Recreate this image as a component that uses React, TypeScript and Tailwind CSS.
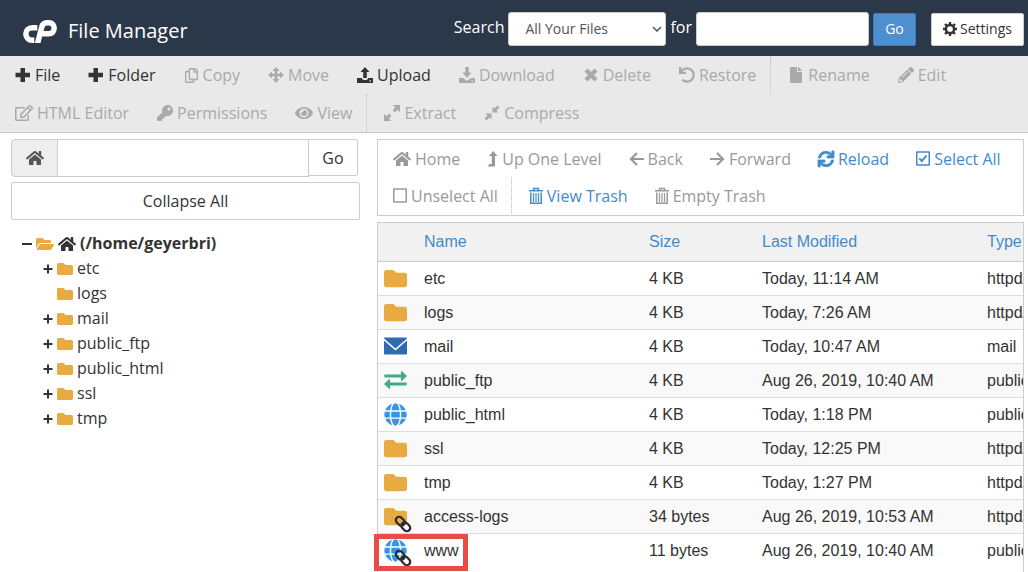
import type { ReactNode } from "react";
import {
  FaEye,
  FaFile,
  FaFolder,
  FaFolderOpen,
  FaGlobe,
  FaHome,
  FaKey,
  FaPencilAlt,
  FaRegCopy,
  FaRegEdit,
  FaSync,
  FaUndo,
} from "react-icons/fa";

function Logo() {
  return (
    <svg width="34" height="23" viewBox="0 0 102 69" fill="none" stroke="currentColor" strokeWidth="16.500" role="img" aria-label="cPanel">
      <path d="M43 23.500H27.500C17 23.500 8.500 31.500 8.500 42S17 60.500 27.500 60.500H34" />
      <path d="M43.500 71L56 22Q59.500 8.500 71 8.500H77.500C88 8.500 93.500 15.500 93.500 25S87 41.500 77.500 41.500H58" />
    </svg>
  );
}

function Glyph({ d, width = 16 }: { d: string; width?: number }) {
  return (
    <svg width={width} height="16" viewBox={`0 0 ${width} 16`} fill="currentColor" fillRule="evenodd" aria-hidden="true">
      <path d={d} />
    </svg>
  );
}

const plus = "M5.500 1h4.500v4.800h5v4.400h-5V15H5.500v-4.800h-5V5.800h5z";
const cross = "M4.500 1.500L8 5l3.500-3.500 3 3L11 8l3.500 3.500-3 3L8 11l-3.500 3.500-3-3L5 8 1.500 4.500z";
const move = "M8 0l3.500 4H9.300v2.700H12V4.500L16 8l-4 3.500V9.300H9.300V12h2.200L8 16l-3.500-4h2.200V9.300H4v2.200L0 8l4-3.500v2.200h2.700V4H4.500z";
const upload = "M8 0l4.500 5H9.800v6H6.200V5H3.500zM0 11h4.800c.3 1.500 1.400 2 3.200 2s2.900-.5 3.200-2H16v5H0zM12.500 13.300v1.200h1.500v-1.200z";
const download = "M6.200 0h3.600v5.500h2.700L8 11 3.500 5.500h2.700zM0 11h4.200L8 14l3.800-3H16v5H0zM12.500 13.300v1.200h1.500v-1.200z";
const extract = "M8.800 0h7.200v7.200l-2.400-2.400-2.600 2.600L8.600 5l2.600-2.600zM7.200 16H0V8.800l2.400 2.400L5 8.600 7.400 11l-2.600 2.600z";
const compress = "M8.500 7.500V1.500l2 2L13.500 .5l2 2L12.500 5.500l2 2zM7.500 8.500v6l-2-2L2.500 15.500l-2-2L3.500 10.500l-2-2z";
const levelUp = "M6.200 0l4.300 5H8v10.500H.5L2.500 13H4.800V5H2z";

function StrokeGlyph({ d }: { d: string }) {
  return (
    <svg width="15" height="16" viewBox="0 0 15 16" fill="none" stroke="currentColor" strokeWidth="2.200" aria-hidden="true">
      <path d={d} />
    </svg>
  );
}

function TrashIcon() {
  return (
    <svg width="14" height="18" viewBox="0 0 14 18" fill="none" stroke="currentColor" aria-hidden="true">
      <path d="M4.500 3V1.500h5V3" strokeWidth="1.300" />
      <path d="M0 3.750h14" strokeWidth="1.500" />
      <path d="M1.800 5.500v10.700h10.400V5.500" strokeWidth="1.500" />
      <path d="M4.500 6v9M7 6v9M9.500 6v9" strokeWidth="1.200" />
    </svg>
  );
}

function BoxIcon({ checked }: { checked?: boolean }) {
  return (
    <svg width="14" height="15" viewBox="0 0 14 15" fill="none" stroke="currentColor" aria-hidden="true">
      <rect x="0.750" y="1" width="12.500" height="13" rx="0.500" strokeWidth="1.500" />
      {checked && <path d="M3.300 7.300l2.500 2.700 4.800-5.300" strokeWidth="1.900" />}
    </svg>
  );
}

function GearIcon() {
  return (
    <svg width="14" height="14" viewBox="0 0 14 14" fill="none" stroke="currentColor" aria-hidden="true">
      <circle cx="7" cy="7" r="4.100" strokeWidth="2.500" />
      <path
        d="M7 0v2.500M7 11.500V14M0 7h2.500M11.500 7H14M2 2l1.900 1.900M10.100 10.100L12 12M12 2l-1.900 1.900M3.900 10.100L2 12"
        strokeWidth="2.400"
      />
    </svg>
  );
}

function ChevronIcon() {
  return (
    <svg width="10" height="6" viewBox="0 0 10 6" fill="none" stroke="currentColor" strokeWidth="1.500" aria-hidden="true">
      <path d="M1 1l4 4 4-4" />
    </svg>
  );
}

function MailIcon() {
  return (
    <svg width="23" height="18" viewBox="0 0 23 18" fill="#2f6bb0" aria-hidden="true">
      <path d="M1 0.500h21q1 0 1 1L11.500 11.500 0 1.500q0-1 1-1z" />
      <path d="M0 3.500l11.500 10L23 3.500V16.500q0 1-1 1H1q-1 0-1-1z" />
    </svg>
  );
}

function TransferIcon() {
  return (
    <svg width="23" height="18" viewBox="0 0 23 18" fill="#40ae85" aria-hidden="true">
      <path d="M0.500 3.500H17V0.300q0.500-.6 1 0L23 5l-5 4.700q-.5.600-1 0V6.500H0.500q-.5-1.500 0-3z" />
      <path d="M22.500 11.500H6V8.300q-.5-.6-1 0L0 13l5 4.700q.5.600 1 0V14.500h16.500q.5-1.500 0-3z" />
    </svg>
  );
}

function LinkBadge() {
  return (
    <svg
      className="absolute top-2.5 left-2.5 overflow-visible"
      width="18"
      height="18"
      viewBox="0 0 18 18"
      fill="none"
      stroke="#2c2c2c"
      strokeWidth="2.300"
      aria-hidden="true"
    >
      <g transform="rotate(45 9 9)">
        <rect x="0.200" y="5.700" width="9.800" height="6.600" rx="3.300" />
        <rect x="8" y="5.700" width="9.800" height="6.600" rx="3.300" />
      </g>
    </svg>
  );
}

type Tone = "dark" | "muted" | "gray" | "blue";

const tones: Record<Tone, string> = {
  dark: "text-[#333333]",
  muted: "text-[#aaaaaa]",
  gray: "text-[#999999]",
  blue: "text-[#428bca]",
};

type Action = { label: string; icon: ReactNode; tone: Tone; divided?: boolean };

function ActionButton({ label, icon, tone, divided }: Action) {
  return (
    <li className={divided ? "border-l border-dotted border-[#bbbbbb] pl-[3px]" : ""}>
      <button
        type="button"
        className={`flex h-full items-center gap-1 pr-[13px] pl-[14px] whitespace-nowrap ${tones[tone]}`}
      >
        {icon}
        {label}
      </button>
    </li>
  );
}

const fileActions: Action[] = [
  { label: "File", icon: <Glyph d={plus} />, tone: "dark" },
  { label: "Folder", icon: <Glyph d={plus} />, tone: "dark" },
  { label: "Copy", icon: <FaRegCopy size={15} />, tone: "muted" },
  { label: "Move", icon: <Glyph d={move} />, tone: "muted" },
  { label: "Upload", icon: <Glyph d={upload} />, tone: "dark" },
  { label: "Download", icon: <Glyph d={download} />, tone: "muted" },
  { label: "Delete", icon: <Glyph d={cross} />, tone: "muted" },
  { label: "Restore", icon: <FaUndo size={16} />, tone: "muted" },
  { label: "Rename", icon: <FaFile className="h-4 w-4" />, tone: "muted", divided: true },
  { label: "Edit", icon: <FaPencilAlt size={16} />, tone: "muted" },
  { label: "HTML Editor", icon: <FaRegEdit size={18} />, tone: "muted" },
  { label: "Permissions", icon: <FaKey size={16} />, tone: "muted" },
  { label: "View", icon: <FaEye size={18} />, tone: "muted" },
  { label: "Extract", icon: <Glyph d={extract} />, tone: "muted", divided: true },
  { label: "Compress", icon: <Glyph d={compress} />, tone: "muted" },
];

const navActions: Action[] = [
  { label: "Home", icon: <FaHome size={18} />, tone: "gray" },
  { label: "Up One Level", icon: <Glyph d={levelUp} width={11} />, tone: "gray" },
  { label: "Back", icon: <StrokeGlyph d="M8 2L2 8l6 6M2 8h13" />, tone: "gray" },
  { label: "Forward", icon: <StrokeGlyph d="M7 2l6 6-6 6M13 8H0" />, tone: "gray" },
  { label: "Reload", icon: <FaSync size={16} strokeWidth={24} className="overflow-visible" />, tone: "blue" },
  { label: "Select All", icon: <BoxIcon checked />, tone: "blue" },
  { label: "Unselect All", icon: <BoxIcon />, tone: "gray" },
  { label: "View Trash", icon: <TrashIcon />, tone: "blue", divided: true },
  { label: "Empty Trash", icon: <TrashIcon />, tone: "gray" },
];

const folders = [
  { name: "etc", open: true },
  { name: "logs", open: false },
  { name: "mail", open: true },
  { name: "public_ftp", open: true },
  { name: "public_html", open: true },
  { name: "ssl", open: true },
  { name: "tmp", open: true },
];

type Kind = "folder" | "mail" | "ftp" | "web";

type Row = { name: string; kind: Kind; linked?: boolean; size: string; modified: string; type: string };

const rows: Row[] = [
  { name: "etc", kind: "folder", size: "4 KB", modified: "Today, 11:14 AM", type: "httpd/unix-directory" },
  { name: "logs", kind: "folder", size: "4 KB", modified: "Today, 7:26 AM", type: "httpd/unix-directory" },
  { name: "mail", kind: "mail", size: "4 KB", modified: "Today, 10:47 AM", type: "mail" },
  { name: "public_ftp", kind: "ftp", size: "4 KB", modified: "Aug 26, 2019, 10:40 AM", type: "publicftp" },
  { name: "public_html", kind: "web", size: "4 KB", modified: "Today, 1:18 PM", type: "publichtml" },
  { name: "ssl", kind: "folder", size: "4 KB", modified: "Today, 12:25 PM", type: "httpd/unix-directory" },
  { name: "tmp", kind: "folder", size: "4 KB", modified: "Today, 1:27 PM", type: "httpd/unix-directory" },
  { name: "access-logs", kind: "folder", linked: true, size: "34 bytes", modified: "Aug 26, 2019, 10:53 AM", type: "httpd/unix-directory" },
  { name: "www", kind: "web", linked: true, size: "11 bytes", modified: "Aug 26, 2019, 10:40 AM", type: "publichtml" },
];

const kindIcons: Record<Kind, ReactNode> = {
  folder: <FaFolder size={23} color="#e8ab41" />,
  mail: <MailIcon />,
  ftp: <TransferIcon />,
  web: <FaGlobe size={23} color="#3595ea" />,
};

function Header() {
  return (
    <header className="flex h-14 items-center justify-between bg-[#2a3849] pr-1 pl-[23px] text-white">
      <div className="flex items-center gap-[11px] pt-1.5">
        <Logo />
        <h1 className="text-xl">File Manager</h1>
      </div>
      <form className="flex items-center pt-0.5" onSubmit={(e) => e.preventDefault()}>
        <label htmlFor="scope" className="mr-1 pb-1">
          Search
        </label>
        <div className="relative">
          <select
            id="scope"
            className="h-[34px] w-[158px] appearance-none rounded-[3px] border border-[#cccccc] bg-white pl-4 text-sm text-[#555555]"
          >
            <option>All Your Files</option>
          </select>
          <span className="pointer-events-none absolute top-3.5 right-1 text-[#555555]">
            <ChevronIcon />
          </span>
        </div>
        <label htmlFor="query" className="mx-1 pb-1">
          for
        </label>
        <input
          id="query"
          type="text"
          className="h-[34px] w-[173px] rounded-[3px] border border-[#cccccc] bg-white px-2 text-sm text-[#555555]"
        />
        <button type="submit" className="ml-1 h-[33px] w-[43px] rounded-xs border border-[#357ebd] bg-[#4f8fd0] text-sm">
          Go
        </button>
        <button
          type="button"
          className="ml-[15px] flex h-[33px] w-[93px] items-center justify-center gap-[3px] rounded-xs border border-[#cccccc] bg-white text-sm text-[#333333]"
        >
          <GearIcon />
          Settings
        </button>
      </form>
    </header>
  );
}

function Sidebar() {
  return (
    <aside className="w-[349px] shrink-0">
      <form className="flex items-start" onSubmit={(e) => e.preventDefault()}>
        <label
          htmlFor="path"
          aria-label="Home path"
          className="flex h-[38px] w-[47px] items-center justify-center rounded-l border border-[#cccccc] bg-[#eeeeee] text-[#555555]"
        >
          <FaHome size={18} />
        </label>
        <input
          id="path"
          type="text"
          className="-ml-px h-[38px] min-w-0 flex-1 border border-[#cccccc] px-3 text-[#555555]"
        />
        <button type="submit" className="mr-0.5 -ml-px h-[37px] w-[50px] rounded-r-xs border border-[#cccccc]">
          Go
        </button>
      </form>
      <button type="button" className="mt-[5px] h-[38px] w-full rounded-xs border border-[#cccccc]">
        Collapse All
      </button>
      <nav aria-label="Folders" className="mt-[11px] pl-[11px] leading-[25px]">
        <div className="flex h-[25px] items-center gap-1 font-bold">
          <button type="button" aria-label="Collapse" className="h-0.5 w-2.5 bg-[#333333]" />
          <FaFolderOpen size={18} color="#e8ab41" />
          <FaHome size={18} />
          <a href="#home">(/home/geyerbri)</a>
        </div>
        <ul>
          {folders.map((f) => (
            <li key={f.name} className="flex h-[25px] items-center gap-1 pl-[21px]">
              {f.open ? (
                <button type="button" aria-label={`Expand ${f.name}`} className="w-2.5">
                  <svg width="10" height="10" viewBox="0 0 10 10" fill="none" stroke="currentColor" strokeWidth="2" aria-hidden="true">
                    <path d="M0.500 5h9M5 0.500v9" />
                  </svg>
                </button>
              ) : (
                <span className="w-2.5" />
              )}
              <FaFolder size={16} color="#e8ab41" />
              <a href={`#${f.name}`}>{f.name}</a>
            </li>
          ))}
        </ul>
      </nav>
    </aside>
  );
}

function FileTable() {
  return (
    <div className="relative mt-1.5 flex grow flex-col">
      <div className="grow overflow-hidden border border-b-0 border-[#cccccc] font-['Liberation_Sans',Arial,sans-serif]">
        <table className="w-[860px] table-fixed border-collapse text-left">
          <colgroup>
            <col className="w-[42px]" />
            <col className="w-[225px]" />
            <col className="w-[113px]" />
            <col className="w-[225px]" />
            <col />
          </colgroup>
          <thead>
            <tr className="h-[38px] border-b border-[#cccccc] bg-[#f1f1f1] text-[#428bca]">
              <th aria-label="Icon" />
              <th className="pl-1 font-normal">Name</th>
              <th className="pl-1 font-normal">Size</th>
              <th className="pl-1 font-normal">Last Modified</th>
              <th className="pl-1 font-normal">Type</th>
            </tr>
          </thead>
          <tbody>
            {rows.map((r) => (
              <tr key={r.name} className="h-[34px] border-b border-[#dddddd] last:border-b-0 even:bg-[#f9f9f9]">
                <td className="pl-1.5">
                  <span className="relative flex w-[23px]">
                    {kindIcons[r.kind]}
                    {r.linked && <LinkBadge />}
                  </span>
                </td>
                <td className="pt-0.5 pl-1">{r.name}</td>
                <td className="pt-0.5 pl-1">{r.size}</td>
                <td className="pt-0.5 pl-1">{r.modified}</td>
                <td className="pt-0.5 pl-1">{r.type}</td>
              </tr>
            ))}
          </tbody>
        </table>
      </div>
      <div className="pointer-events-none absolute top-[312px] -left-[3px] h-[37px] w-[94px] border-5 border-[#ea4b45]" />
    </div>
  );
}

export default function App() {
  return (
    <div className="flex min-h-screen flex-col bg-white font-['Open_Sans',sans-serif] text-base text-[#333333]">
      <Header />
      <ul className="flex flex-wrap gap-x-px border-b border-[#c3c6ce] bg-[#e9e9e9] pl-px [&>li]:h-[38px]">
        {fileActions.map((a) => (
          <ActionButton key={a.label} {...a} />
        ))}
      </ul>
      <div className="flex grow gap-[17px] pt-1.5 pr-1 pl-[11px]">
        <Sidebar />
        <main className="flex min-w-0 flex-1 flex-col">
          <ul className="flex flex-wrap border border-[#cccccc] pb-px pl-px [&>li]:h-[37px]">
            {navActions.map((a) => (
              <ActionButton key={a.label} {...a} />
            ))}
          </ul>
          <FileTable />
        </main>
      </div>
    </div>
  );
}
